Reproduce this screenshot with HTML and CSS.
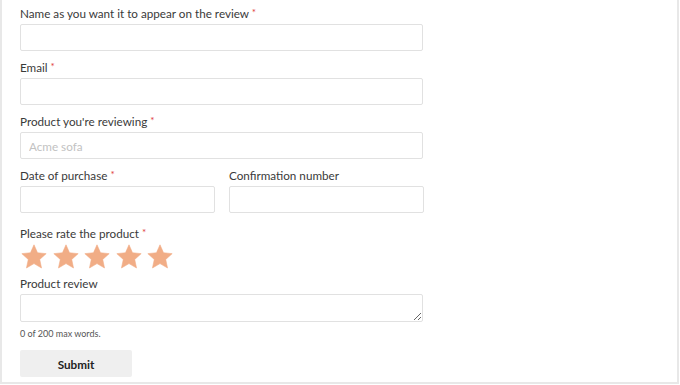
FILE: index.html
```html
<!DOCTYPE html>
<html>
<head>
<meta charset="utf-8">
<link rel="stylesheet" href="styles.css">
</head>
<body>
<div class="frame">
  <form class="form">
    <div class="field">
      <label class="label">Name as you want it to appear on the review <span class="req">*</span></label>
      <input class="input" type="text">
    </div>
    <div class="field">
      <label class="label">Email <span class="req">*</span></label>
      <input class="input" type="text">
    </div>
    <div class="field">
      <label class="label">Product you're reviewing <span class="req">*</span></label>
      <input class="input" type="text" placeholder="Acme sofa">
    </div>
    <div class="row">
      <div class="field">
        <label class="label">Date of purchase <span class="req">*</span></label>
        <input class="input" type="text">
      </div>
      <div class="field">
        <label class="label">Confirmation number</label>
        <input class="input" type="text">
      </div>
    </div>
    <div class="field">
      <label class="label">Please rate the product <span class="req">*</span></label>
      <div class="stars">
        <svg class="star" viewBox="0 0 26 25"><path d="M13 0.8 L16.53 8.75 L25.17 9.64 L18.71 15.45 L20.52 23.96 L13 19.6 L5.48 23.96 L7.29 15.45 L0.83 9.64 L9.47 8.75 Z"/></svg>
        <svg class="star" viewBox="0 0 26 25"><path d="M13 0.8 L16.53 8.75 L25.17 9.64 L18.71 15.45 L20.52 23.96 L13 19.6 L5.48 23.96 L7.29 15.45 L0.83 9.64 L9.47 8.75 Z"/></svg>
        <svg class="star" viewBox="0 0 26 25"><path d="M13 0.8 L16.53 8.75 L25.17 9.64 L18.71 15.45 L20.52 23.96 L13 19.6 L5.48 23.96 L7.29 15.45 L0.83 9.64 L9.47 8.75 Z"/></svg>
        <svg class="star" viewBox="0 0 26 25"><path d="M13 0.8 L16.53 8.75 L25.17 9.64 L18.71 15.45 L20.52 23.96 L13 19.6 L5.48 23.96 L7.29 15.45 L0.83 9.64 L9.47 8.75 Z"/></svg>
        <svg class="star" viewBox="0 0 26 25"><path d="M13 0.8 L16.53 8.75 L25.17 9.64 L18.71 15.45 L20.52 23.96 L13 19.6 L5.48 23.96 L7.29 15.45 L0.83 9.64 L9.47 8.75 Z"/></svg>
      </div>
    </div>
    <div class="field">
      <label class="label">Product review</label>
      <textarea class="textarea"></textarea>
      <div class="hint">0 of 200 max words.</div>
    </div>
    <button class="submit" type="button">Submit</button>
  </form>
</div>
</body>
</html>
```

FILE: styles.css
```css
html, body {
  margin: 0;
  padding: 0;
  background: #ffffff;
}
body {
  font-family: Lato, "Liberation Sans", sans-serif;
  color: #3a3a3a;
}
.frame {
  box-sizing: border-box;
  width: 679px;
  height: 384px;
  border-left: 2px solid #e8e8e8;
  border-right: 2px solid #e8e8e8;
  border-bottom: 2px solid #e8e8e8;
  background: #fff;
}
.form {
  width: 403px;
  padding: 5px 0 0 18px;
  display: flex;
  flex-direction: column;
}
.field {
  display: flex;
  flex-direction: column;
  margin-bottom: 8px;
}
.label {
  display: block;
  height: 17px;
  font-size: 11.7px;
  line-height: 17px;
  margin-bottom: 2px;
  color: #3a3a3a;
}
.req {
  color: #e03c3c;
  font-size: 10px;
  line-height: 0;
  vertical-align: 2px;
}
.input {
  box-sizing: border-box;
  height: 27px;
  width: 100%;
  border: 1px solid #e1e1e1;
  border-radius: 2px;
  padding: 0 8px;
  font-family: Lato, "Liberation Sans", sans-serif;
  font-size: 11.7px;
  color: #333;
  background: #fff;
  outline: none;
}
.input::placeholder {
  color: #c2c2c2;
}
.row {
  display: grid;
  grid-template-columns: 195px 195px;
  column-gap: 14px;
  margin-bottom: 4px;
}
.stars {
  display: flex;
  gap: 5.5px;
  height: 24px;
  margin-left: 1px;
  margin-bottom: -1px;
}
.star {
  width: 26px;
  height: 25px;
  fill: #f1ad86;
  stroke: #f1ad86;
  stroke-width: 0.6;
  stroke-linejoin: round;
}
.textarea {
  box-sizing: border-box;
  height: 28px;
  width: 100%;
  border: 1px solid #e1e1e1;
  border-radius: 2px;
  resize: vertical;
  font-family: Lato, "Liberation Sans", sans-serif;
  font-size: 11.7px;
  margin: 0;
  display: block;
}
.hint {
  font-size: 9px;
  line-height: 12px;
  margin-top: 6px;
  color: #555;
}
.submit {
  width: 112px;
  height: 27px;
  margin-top: 2px;
  border: none;
  border-radius: 2px;
  background: #efefef;
  font-family: Lato, "Liberation Sans", sans-serif;
  font-weight: 700;
  font-size: 11.7px;
  color: #222;
  padding: 0;
}
```
